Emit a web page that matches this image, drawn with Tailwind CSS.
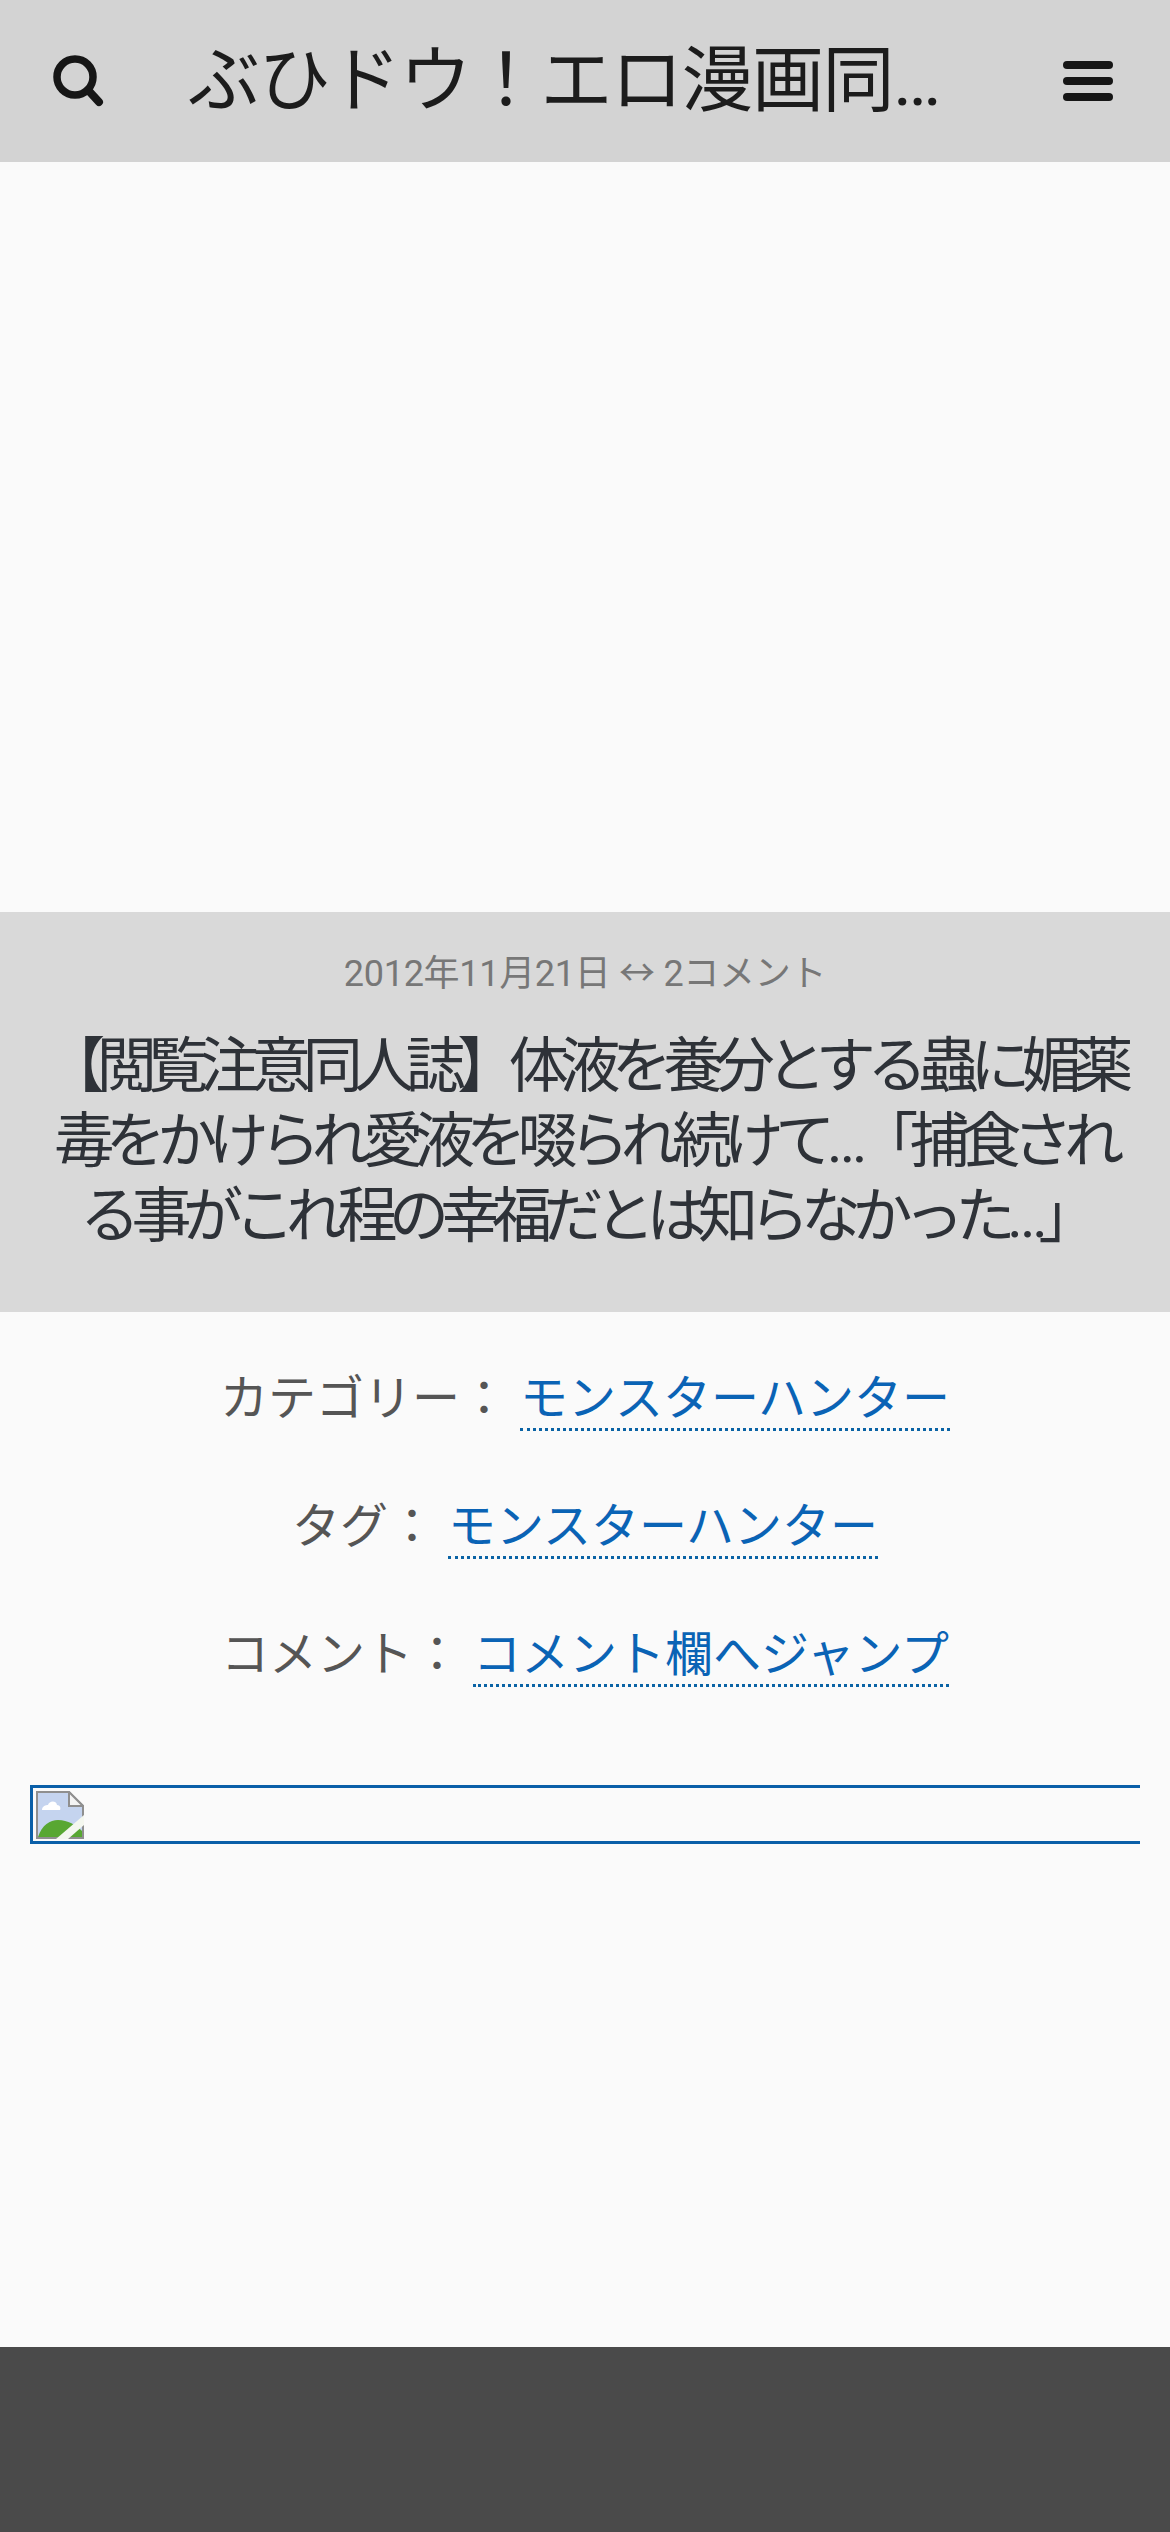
<!DOCTYPE html>
<html lang="ja">

<head>
    <meta charset="utf-8">
    <meta name="viewport" content="width=device-width, initial-scale=1">
    <title>ぶひドウ！エロ漫画同人誌</title>
    <script src="https://cdn.jsdelivr.net/npm/@tailwindcss/browser@4"></script>
</head>

<body class="flex flex-col h-[2532px] overflow-hidden bg-[#fafafa] font-['Roboto','Noto_Sans_CJK_JP',sans-serif]">
    <header class="flex items-center h-[162px] bg-[#d3d3d3] shrink-0">
        <button class="flex justify-center items-center w-[156px] h-full shrink-0 pl-[2px]">
            <svg class="w-[54px] h-[54px] text-[#161616]" viewBox="0 0 54 54" fill="none" stroke="currentColor">
                <circle cx="23" cy="23" r="18" stroke-width="7.5" />
                <path d="M36 36 L47 48" stroke-width="8" stroke-linecap="round" />
            </svg>
        </button>
        <h1 class="flex-1 min-w-0 pl-[32px] pr-[36px] text-[72px] leading-[162px] text-[#1c1c1c] tracking-[-1.5px] truncate">ぶひドウ！エロ漫画同人誌</h1>
        <button class="flex flex-col justify-center items-center gap-[8px] w-[164px] h-full shrink-0">
            <span class="block w-[50px] h-[8px] rounded-full bg-[#161616]"></span>
            <span class="block w-[50px] h-[8px] rounded-full bg-[#161616]"></span>
            <span class="block w-[50px] h-[8px] rounded-full bg-[#161616]"></span>
        </button>
    </header>

    <div class="h-[750px] shrink-0"></div>

    <section class="h-[400px] shrink-0 bg-[#d9d9d9] text-center pt-[38px] px-[24px]">
        <p class="text-[36px] leading-[48px] text-[#777777] tracking-[-0.3px]">2012年11月21日 ↔ 2コメント</p>
        <h2 class="mt-[31px] text-[60px] leading-[75px] text-[#2e3238] tracking-[-8.5px]">【閲覧注意同人誌】体液を養分とする蟲に媚薬<br>毒をかけられ愛液を啜られ続けて…「捕食され<br>る事がこれ程の幸福だとは知らなかった…」</h2>
    </section>

    <ul class="flex flex-col items-center pt-[44px] gap-[42px] text-[48px] leading-[86px] text-[#555555] shrink-0">
        <li class="h-[86px]">カテゴリー： <a href="#" class="text-[#0a63b5] border-b-[3px] border-dotted border-[#0a63a5] pb-[1px]">モンスターハンター</a></li>
        <li class="h-[86px]">タグ： <a href="#" class="text-[#0a63b5] border-b-[3px] border-dotted border-[#0a63a5] pb-[1px]">モンスターハンター</a></li>
        <li class="h-[86px]">コメント： <a href="#" class="text-[#0a63b5] border-b-[3px] border-dotted border-[#0a63a5] pb-[1px]">コメント欄へジャンプ</a></li>
    </ul>

    <div class="mx-[30px] mt-[87px] h-[59px] border-[3px] border-r-0 border-[#0a5fa8] shrink-0 p-[3px]">
        <svg class="w-[48px] h-[48px]" viewBox="0 0 48 48">
            <path d="M1 1 H33 L47 15 V47 H1 Z" fill="#c5d4ef" stroke="#8f8f8f" stroke-width="2" />
            <path d="M33 1 L47 15 H33 Z" fill="#f4f4f4" stroke="#8f8f8f" stroke-width="2" />
            <path d="M6 19 C6 15 10 14 12 14 C13 10 20 9 21 14 C24 14 25 17 24 19 Z" fill="#ffffff" />
            <path d="M2 46 C6 34 14 29 22 29 C32 29 40 34 46 40 V46 Z" fill="#58a732" />
            <path d="M20 48 L48 24 V34 L32 48 Z" fill="#f4f7ef" />
        </svg>
    </div>

    <div class="flex-1"></div>
    <footer class="h-[185px] bg-[#4a4a4a] shrink-0"></footer>
</body>

</html>
